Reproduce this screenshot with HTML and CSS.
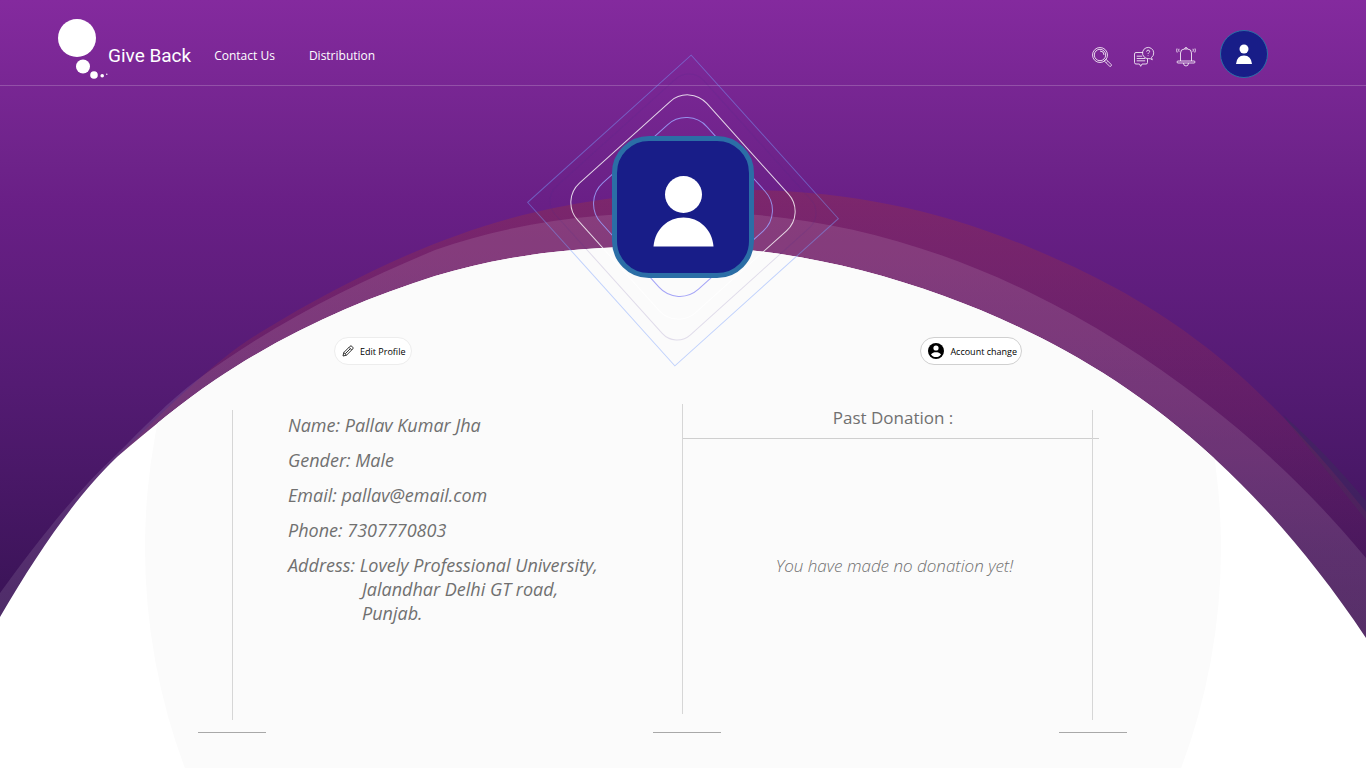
FILE: index.html
```html
<!DOCTYPE html>
<html lang="en">
<head>
<meta charset="utf-8">
<meta name="viewport" content="width=device-width, initial-scale=1">
<title>Give Back - Profile</title>
<link rel="stylesheet" href="styles.css">
</head>
<body>
<div class="page">
  <svg class="backdrop" viewBox="0 0 1366 768" preserveAspectRatio="none" aria-hidden="true">
    <defs>
      <linearGradient id="sky" x1="0" y1="0" x2="0" y2="640" gradientUnits="userSpaceOnUse">
        <stop offset="0" stop-color="#842a9e"/>
        <stop offset=".25" stop-color="#6e238a"/>
        <stop offset=".32" stop-color="#691f86"/>
        <stop offset=".6" stop-color="#541b73"/>
        <stop offset=".92" stop-color="#3c1459"/>
        <stop offset="1" stop-color="#381355"/>
      </linearGradient>
      <linearGradient id="glow" x1="0" y1="190" x2="0" y2="560" gradientUnits="userSpaceOnUse">
        <stop offset="0" stop-color="#9c333c" stop-opacity=".36"/>
        <stop offset=".6" stop-color="#9c2c4c" stop-opacity=".22"/>
        <stop offset="1" stop-color="#84285c" stop-opacity=".14"/>
      </linearGradient>
      <clipPath id="hill">
        <path d="M0 617C39 550 78 494 117 457C150 429 182 402 215 380C288 331 362 299 435 276C514 252 593 246 672 246C763 246 853 263 944 296C1034 329 1125 376 1215 459C1265 505 1316 563 1366 638V768H0Z"/>
      </clipPath>
    </defs>
    <rect width="1366" height="768" fill="url(#sky)"/>
    <path fill="#3c2a5c" opacity=".5" d="M1283 415C1312 440 1340 470 1366 501V520L1290 425Z"/>
    <path fill="url(#glow)" d="M117 457C165 411 213 361 261 332C348 279 436 237 523 215C595 197 668 190 740 190C837 190 934 207 1031 248C1089 272 1148 302 1206 347C1259 388 1313 446 1366 512V768H117Z"/>
    <path fill="#fff" fill-opacity=".11" d="M0 593C39 539 78 490 117 454C144 427 170 400 197 380C276 322 356 283 435 250C520 220 605 212 690 212C804 212 917 237 1031 293C1089 321 1148 358 1206 403C1259 444 1313 494 1366 558V768H0Z"/>
    <g clip-path="url(#hill)">
      <rect width="1366" height="768" fill="#fff"/>
      <ellipse cx="683" cy="548" rx="538" ry="582" fill="#fbfbfb"/>
    </g>
  </svg>

  <header class="topbar">
    <a class="brand" href="#">
      <svg class="brand-mark" viewBox="0 0 50 60" aria-hidden="true">
        <circle cx="19" cy="19" r="19"/><circle cx="25" cy="47.500" r="7"/><circle cx="36" cy="56" r="3.800"/><circle cx="44.200" cy="56.700" r="1.800"/><circle cx="48.800" cy="55.200" r=".7"/>
      </svg>
      <span class="brand-name">Give Back</span>
    </a>
    <nav class="nav">
      <a href="#">Contact Us</a>
      <a href="#">Distribution</a>
    </nav>
    <div class="tools">
      <button class="tool" type="button" aria-label="Search">
        <svg viewBox="0 0 20 20"><circle cx="8" cy="8" r="7.500"/><circle cx="8" cy="8" r="5.700"/><path d="M8 4a4 4 0 0 1 4 4M12.300 14l1.700-1.700 5.200 5.200q.6.900-.2 1.600-.8.600-1.500 0zM14.500 15.500l1-1"/></svg>
      </button>
      <button class="tool" type="button" aria-label="Questions">
        <svg viewBox="0 0 20 20"><path d="M8.800 5.500H2Q.5 5.500.5 7v8.500Q.5 17 2 17h3.500l1.200 2.300L8 17h4q1.500 0 1.500-1.500V12M2.700 9.200h5.500M2.700 11.500h8.500M2.700 13.800h8.500"/><path d="M17.500 10.500a5.600 5.600 0 1 0-2.800 1.100l2 .2 1.600 1z"/><path d="M12.600 4.700q.1-1.600 1.500-1.600t1.500 1.300q0 .8-.8 1.300-.7.500-.7 1.300M14.100 8.400v.7"/></svg>
      </button>
      <button class="tool" type="button" aria-label="Notifications">
        <svg viewBox="0 0 20 20"><path d="M4.500 14V6q0-4 4-4h3q4 0 4 4v8M2 14h16q1 0 1 1t-1 1H2q-1 0-1-1t1-1zM7.500 16q0 3 2.500 3t2.500-3M8.700 2q0-1.500 1.300-1.500T11.300 2M1 1.500q-.8 2 .2 4M3 1.800q-.7 1.500.1 3M19 1.500q.8 2-.2 4M17 1.800q.7 1.500-.1 3"/></svg>
      </button>
      <button class="user" type="button" aria-label="Account">
        <svg viewBox="0 0 18 20"><circle cx="9" cy="5" r="4.500"/><path d="M1 20q.8-8.500 8-8.500t8 8.500z"/></svg>
      </button>
    </div>
  </header>

  <main class="profile">
    <div class="portrait">
      <svg class="rings" viewBox="-160 -160 320 320" aria-hidden="true">
        <rect x="-110" y="-110" width="220" height="220" transform="translate(0 3.500) rotate(48)" stroke="#7aa0ff" stroke-opacity=".45"/>
        <rect x="-100" y="-100" width="200" height="200" rx="20" transform="rotate(48)" stroke="#4a3090" stroke-opacity=".15"/>
        <rect x="-87" y="-87" width="174" height="174" rx="26" transform="rotate(48)" stroke="#fff" stroke-opacity=".8"/>
        <rect x="-71.500" y="-71.500" width="143" height="143" rx="28" transform="rotate(48)" stroke="#9a9af6" stroke-opacity=".9"/>
      </svg>
      <svg class="avatar" viewBox="0 0 132 132" role="img" aria-label="Profile picture"><circle cx="66.500" cy="53.500" r="18.500"/><path d="M36.500 105.500C38 88 51 76.500 66.500 76.500S95 88 96.500 105.500z"/></svg>
    </div>

    <div class="actions">
      <button class="pill pill-soft" type="button">
        <svg class="pencil" viewBox="0 0 12 12" aria-hidden="true"><path d="M1 11l.8-3.500L8 1.300q.9-.9 1.900 0l.8.800q.9 1 0 1.900L4.500 10.200zM1.800 7.500l2.700 2.700M7 2.300l2.700 2.700M3.200 8.800L8.300 3.700"/></svg>
        Edit Profile
      </button>
      <button class="pill" type="button">
        <svg class="person" viewBox="0 0 16 16" aria-hidden="true"><circle cx="8" cy="8" r="8"/><circle cx="8" cy="5" r="2.600" fill="#fff"/><path fill="#fff" d="M3 11.400C4 9.700 6 9.200 8 9.200s4 .5 5 2.200C12 13 10 14 8 14s-4-1-5-2.600z"/></svg>
        Account change
      </button>
    </div>

    <div class="details">
      <section class="about" aria-label="Personal details">
        <p>Name: Pallav Kumar Jha</p>
        <p>Gender: Male</p>
        <p>Email: pallav@email.com</p>
        <p>Phone: 7307770803</p>
        <p>Address: Lovely Professional University,<span class="address-more">Jalandhar Delhi GT road,<br>Punjab.</span></p>
      </section>
      <section class="donations">
        <h2>Past Donation :</h2>
        <p>You have made no donation yet!</p>
      </section>
      <div class="edge"></div>
    </div>
    <div class="feet"><span></span><span></span><span></span></div>
  </main>
</div>
</body>
</html>
```
FILE: styles.css
```css
* { box-sizing: border-box; }

body {
  margin: 0;
  font-family: "Open Sans", "Noto Sans", sans-serif;
}

button {
  font-family: inherit;
  cursor: pointer;
}

.page {
  position: relative;
  isolation: isolate;
  min-height: 100vh;
  overflow: hidden;
}

.backdrop {
  position: absolute;
  inset: 0;
  z-index: -1;
  width: 100%;
  height: 100%;
}

.topbar {
  display: flex;
  align-items: center;
  height: 86px;
  padding: 12px 98px 0 58px;
  border-bottom: 1px solid rgba(255, 255, 255, .2);
}

.brand {
  display: flex;
  align-items: center;
  color: #fff;
  text-decoration: none;
}

.brand-mark {
  width: 50px;
  height: 60px;
  fill: #fff;
}

.brand-name {
  padding-top: 14px;
  font: 400 19px/24px Roboto, sans-serif;
}

.nav {
  display: flex;
  gap: 34px;
  margin-left: 23px;
  padding-top: 14px;
}

.nav a {
  color: #fff;
  font-size: 12px;
  line-height: 20px;
  text-decoration: none;
}

.tools {
  display: flex;
  align-items: center;
  gap: 22px;
  margin-left: auto;
  padding-top: 16px;
}

.tool {
  width: 20px;
  height: 20px;
  padding: 0;
  border: 0;
  background: none;
}

.tool svg {
  display: block;
  fill: none;
  stroke: #fff;
  stroke-width: .8;
  overflow: visible;
}

.user {
  display: grid;
  place-items: center;
  width: 48px;
  height: 48px;
  margin: 0 0 6px 2px;
  padding: 0;
  border: 1px solid #2b6ea6;
  border-radius: 50%;
  background: #181d88;
}

.user svg {
  width: 18px;
  height: 20px;
  fill: #fff;
}

.portrait {
  position: relative;
  width: 142px;
  height: 142px;
  margin: 50px auto 0;
}

.rings {
  position: absolute;
  inset: -89px;
  fill: none;
}

.avatar {
  position: relative;
  display: block;
  width: 100%;
  height: 100%;
  border: 5px solid #2b6ea6;
  border-radius: 37px;
  background: #181d88;
  fill: #fff;
}

.actions {
  display: flex;
  justify-content: space-between;
  margin-top: 59px;
  padding: 0 344px 0 334px;
}

.pill {
  display: flex;
  align-items: center;
  gap: 6px;
  height: 28px;
  padding: 0 4px 0 7px;
  border: 1px solid #d0d0d0;
  border-radius: 14px;
  background: #fff;
  color: #000;
  font-size: 9px;
}

.pill-soft {
  padding-right: 6px;
  border-color: #ededed;
}

.pencil {
  width: 12px;
  height: 12px;
  fill: none;
  stroke: #333;
  stroke-width: 1;
}

.person {
  width: 16px;
  height: 16px;
}

.details {
  display: grid;
  grid-template-columns: 450fr 410fr 1px;
  margin: 39px 273px 0 232px;
  color: #707070;
  font-size: 18px;
  line-height: 24px;
}

.about {
  min-height: 310px;
  margin-top: 6px;
  padding: 3px 0 0 55px;
  border-left: 1px solid #d6d6d6;
  font-style: italic;
}

.about p { margin: 0 0 11px; }

.address-more {
  display: block;
  padding-left: 74px;
}

.donations {
  height: 310px;
  border-left: 1px solid #d6d6d6;
  font-size: 17px;
  text-align: center;
}

.donations h2 {
  margin: 0 -7px 0 0;
  padding: 2px 0 8px 4px;
  border-bottom: 1px solid #cfcfcf;
  font-size: 17px;
  font-weight: 400;
}

.donations p {
  margin: 115px 0 0 14px;
  font-style: italic;
  font-weight: 300;
}

.edge {
  height: 310px;
  margin-top: 6px;
  background: #d6d6d6;
}

.feet {
  display: grid;
  grid-template-columns: 455fr 406fr 68px;
  margin: 12px 239px 35px 198px;
}

.feet span {
  width: 68px;
  height: 1px;
  background: #a8a8a8;
}
```
